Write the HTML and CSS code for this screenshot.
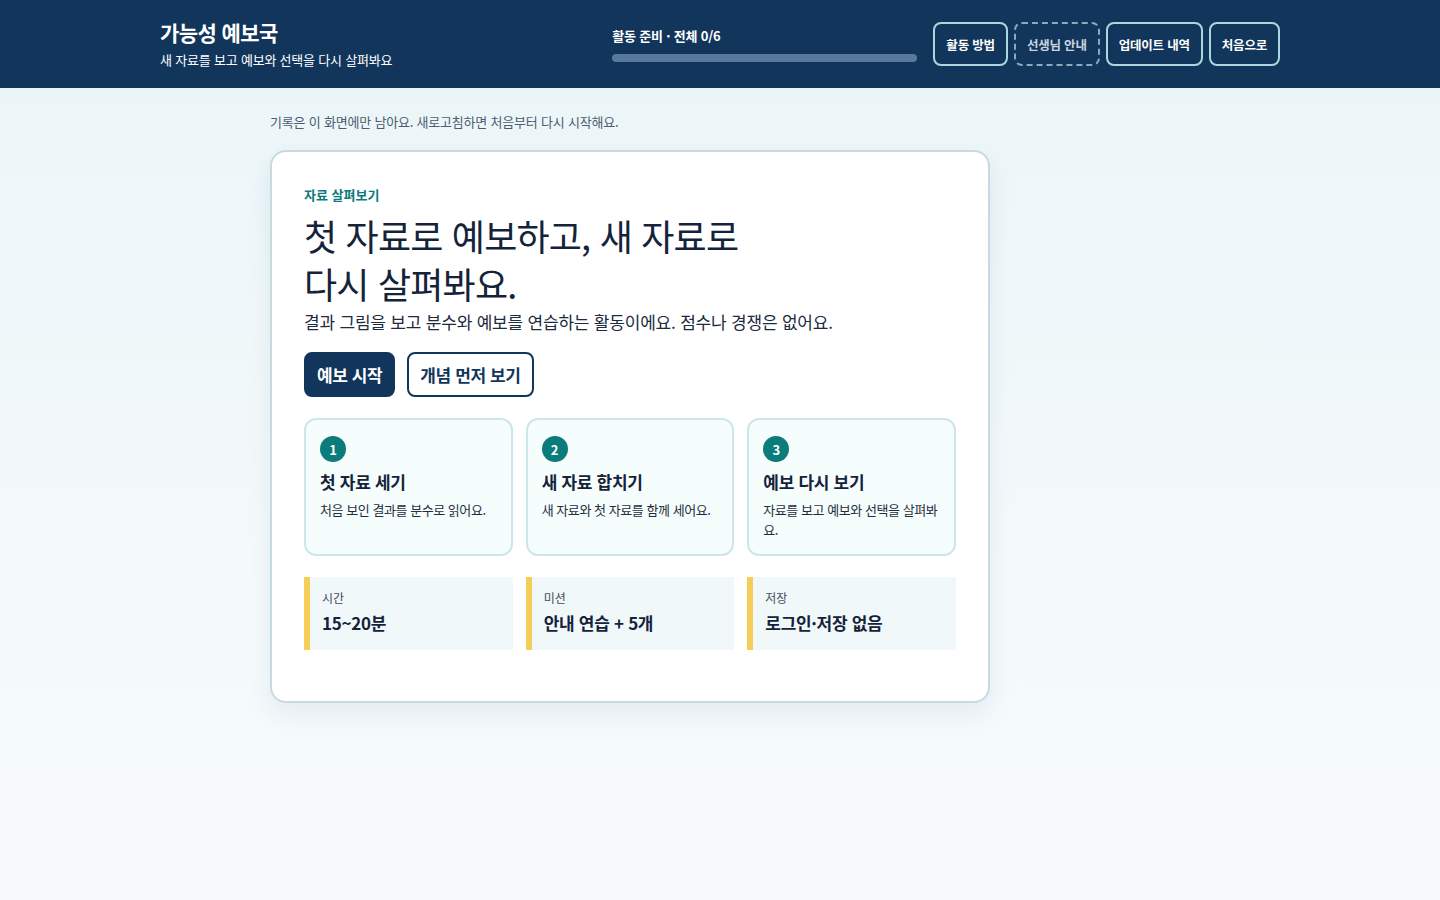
FILE: index.html
```html
<!DOCTYPE html>
<html lang="ko">
<head>
<meta charset="UTF-8" />
<meta name="viewport" content="width=device-width, initial-scale=1.0" />
<title>가능성 예보국</title>
<link rel="stylesheet" href="styles.css">
</head>
<body>

<header class="topbar">
  <div class="topbar-inner">
    <div class="brand">
      <h1>가능성 예보국</h1>
      <p>새 자료를 보고 예보와 선택을 다시 살펴봐요</p>
    </div>
    <div class="progress">
      <span class="progress-label">활동 준비 · 전체 0/6</span>
      <div class="progress-track"><div class="progress-fill" style="width:0%"></div></div>
    </div>
    <nav class="top-actions">
      <button class="top-btn">활동 방법</button>
      <button class="top-btn dashed">선생님 안내</button>
      <button class="top-btn">업데이트 내역</button>
      <button class="top-btn">처음으로</button>
    </nav>
  </div>
</header>

<main class="page">
  <p class="notice">기록은 이 화면에만 남아요. 새로고침하면 처음부터 다시 시작해요.</p>

  <section class="card">
    <span class="eyebrow">자료 살펴보기</span>
    <h2 class="headline">첫 자료로 예보하고, 새 자료로 다시 살펴봐요.</h2>
    <p class="lead">결과 그림을 보고 분수와 예보를 연습하는 활동이에요. 점수나 경쟁은 없어요.</p>

    <div class="actions">
      <button class="btn primary">예보 시작</button>
      <button class="btn outline">개념 먼저 보기</button>
    </div>

    <div class="steps">
      <div class="step">
        <span class="step-num">1</span>
        <h3>첫 자료 세기</h3>
        <p>처음 보인 결과를 분수로 읽어요.</p>
      </div>
      <div class="step">
        <span class="step-num">2</span>
        <h3>새 자료 합치기</h3>
        <p>새 자료와 첫 자료를 함께 세어요.</p>
      </div>
      <div class="step">
        <span class="step-num">3</span>
        <h3>예보 다시 보기</h3>
        <p>자료를 보고 예보와 선택을 살펴봐요.</p>
      </div>
    </div>

    <div class="facts">
      <div class="fact"><span>시간</span><strong>15~20분</strong></div>
      <div class="fact"><span>미션</span><strong>안내 연습 + 5개</strong></div>
      <div class="fact"><span>저장</span><strong>로그인·저장 없음</strong></div>
    </div>
  </section>
</main>

</body>
</html>
```

FILE: styles.css
```css
* { box-sizing: border-box; }
body { margin: 0; font-family: "Noto Sans CJK KR", "Noto Sans", sans-serif; color: #14233a; background: linear-gradient(180deg, #eaf5f8 0%, #f4f9fb 60%, #f6fafc 100%); min-height: 900px; }
button { font-family: inherit; cursor: pointer; }

/* 상단 바 */
.topbar { background: #12355b; color: #fff; height: 88px; }
.topbar-inner { width: 1120px; margin: 0 auto; height: 100%; display: flex; align-items: center; }
.brand h1 { margin: 0; font-size: 21px; font-weight: 700; line-height: 28px; letter-spacing: -0.6px; margin-top: -2px; }
.brand p { margin: 5px 0 0; font-size: 13px; line-height: 18px; letter-spacing: -0.2px; }
.progress { margin-left: auto; width: 305px; display: flex; flex-direction: column; gap: 9px; margin-right: 16px; margin-top: 0; }
.progress-label { font-size: 13px; font-weight: 700; line-height: 18px; letter-spacing: -0.2px; }
.progress-track { height: 8px; border-radius: 4px; background: #58789c; overflow: hidden; }
.progress-fill { height: 100%; background: #7fd0d4; }
.top-actions { display: flex; gap: 6px; }
.top-btn { height: 44px; padding: 0 11px; border: 2px solid #a9d9de; border-radius: 8px; background: transparent; color: #fff; font-size: 12.5px; font-weight: 700; letter-spacing: -0.2px; }
.top-btn.dashed { border-style: dashed; border-color: #8fa6bf; color: #c9d4df; }

/* 본문 */
.page { width: 900px; margin: 0 auto; padding: 25px 0 40px; }
.notice { margin: 0 0 19px; font-size: 13px; line-height: 18px; color: #4b5c70; letter-spacing: -0.2px; }
.card { width: 720px; background: #fff; border: 2px solid #c8d9e2; border-radius: 16px; padding: 31px 32px 51px; box-shadow: 0 10px 24px rgba(20, 60, 90, 0.08); }
.eyebrow { display: block; font-size: 13px; font-weight: 700; color: #0b7b7b; line-height: 20px; margin-top: 2px; }
.headline { margin: 6px 0 0; max-width: 460px; font-size: 36px; font-weight: 400; line-height: 48px; letter-spacing: -0.8px; color: #14233a; }
.lead { margin: 2px 0 0; font-size: 17px; line-height: 26px; color: #1c2b3d; letter-spacing: -0.2px; }

.actions { display: flex; gap: 12px; margin-top: 17px; }
.btn { height: 45px; padding: 0 11px; border-radius: 8px; font-size: 17px; font-weight: 700; letter-spacing: -0.4px; }
.btn.primary { background: #12355b; color: #fff; border: 2px solid #12355b; }
.btn.outline { background: #fff; color: #12355b; border: 2px solid #12355b; }

.steps { display: grid; grid-template-columns: repeat(3, 1fr); gap: 13px; margin-top: 21px; }
.step { height: 138px; border: 2px solid #cde6ea; border-radius: 12px; background: #f6fdfd; padding: 16px 14px 14px; }
.step-num { display: flex; align-items: center; justify-content: center; width: 26px; height: 26px; border-radius: 50%; background: #0b7b7b; color: #fff; font-size: 13px; font-weight: 700; }
.step h3 { margin: 7px 0 0; font-size: 17px; font-weight: 700; line-height: 26px; color: #14233a; letter-spacing: -0.3px; }
.step p { margin: 5px 0 0; font-size: 13px; line-height: 20px; color: #1f2d3d; letter-spacing: -0.45px; }

.facts { display: grid; grid-template-columns: repeat(3, 1fr); gap: 13px; margin-top: 21px; }
.fact { height: 73px; background: #f1f8fa; border-left: 6px solid #f6cd57; padding: 12px 12px; display: flex; flex-direction: column; }
.fact span { font-size: 12px; line-height: 18px; color: #3e4d5e; }
.fact strong { margin-top: 4px; font-size: 17px; line-height: 24px; font-weight: 700; color: #14233a; letter-spacing: -0.3px; }
```
